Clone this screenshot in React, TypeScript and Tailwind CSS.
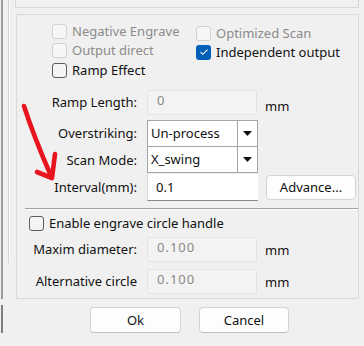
import React from 'react';

const font = { fontFamily: '"Noto Sans", "Open Sans", sans-serif' };

function Check({ label, disabled, checked }: { label: string; disabled?: boolean; checked?: boolean }) {
  return (
    <div className="flex items-center gap-[5px]">
      {checked ? (
        <span className="w-[15px] h-[15px] rounded-[3px] bg-[#005fb8] flex items-center justify-center">
          <svg width="10" height="8" viewBox="0 0 10 8">
            <path d="M1.5 4.2 L3.8 6.3 L8.5 1.6" fill="none" stroke="#fff" strokeWidth="1.1" />
          </svg>
        </span>
      ) : (
        <span
          className={
            disabled
              ? 'w-[15px] h-[15px] rounded-[3px] border border-[#d2d2d2] bg-[#f6f6f6]'
              : 'w-[15px] h-[15px] rounded-[3px] border border-[#5c5c5c] bg-[#f4f4f4]'
          }
        />
      )}
      <span className={disabled ? 'text-[#8b8b8b]' : 'text-[#111]'}>{label}</span>
    </div>
  );
}

function Label({ children }: { children: React.ReactNode }) {
  return <div className="w-[120px] text-right text-[#111]">{children}</div>;
}

function DisabledInput({ value }: { value: string }) {
  return (
    <div className="w-[110px] h-full border border-[#e3e3e3] bg-[#f3f3f3] rounded-[2px] pl-[9px] pt-[3px] text-[#8a8a8a] tracking-[1px]">
      {value}
    </div>
  );
}

function Combo({ value, top }: { value: string; top?: boolean }) {
  return (
    <div className={top ? 'w-[111px] h-[27px] flex border border-[#a5a5a5] bg-white' : 'w-[111px] h-[26px] flex border border-t-0 border-[#a5a5a5] bg-white'}>
      <div className="flex-1 pl-[3px] flex items-center text-[#111]">{value}</div>
      <div className="w-[20px] border-l border-[#a5a5a5] flex items-center justify-center bg-white">
        <svg width="9" height="5" viewBox="0 0 9 5">
          <path d="M0 0 L9 0 L4.5 5 Z" fill="#111" />
        </svg>
      </div>
    </div>
  );
}

export default function App() {
  return (
    <div className="relative w-[364px] h-[346px] bg-[#f0f0f0] flex text-[13px] leading-none overflow-hidden" style={font}>
      {/* left edge of neighbouring window */}
      <div className="w-[15px] flex pl-[1px]">
        <div className="w-[2px] flex flex-col">
          <div className="h-[299px] bg-[#9c9c9c]" />
          <div className="mt-[6px] h-[28px] bg-[#7e7e7e]" />
        </div>
        <div className="ml-[5px] w-[2px] h-[263px] border-l border-[#d2d2d2] bg-[#fafafa]" />
      </div>

      <div className="flex flex-col">
        {/* upper group box (cut off) */}
        <div className="w-[344px] h-[8px] border-x border-b border-[#d9d9d9]" />

        {/* main group box */}
        <div className="ml-[1px] mt-[6px] w-[343px] h-[285px] border border-[#d9d9d9] flex flex-col">
          <div className="pl-[35px] pt-[9px] flex flex-col">
            <div className="h-[19px] flex">
              <div className="w-[144px]"><Check label="Negative Engrave" disabled /></div>
              <Check label="Optimized Scan" disabled />
            </div>
            <div className="h-[18px] flex">
              <div className="w-[144px]"><Check label="Output direct" disabled /></div>
              <Check label="Independent output" checked />
            </div>
            <div className="h-[18px] flex">
              <Check label="Ramp Effect" />
            </div>
          </div>

          {/* Ramp length */}
          <div className="mt-[11px] h-[25px] flex items-center">
            <Label>Ramp Length:</Label>
            <div className="ml-[10px] h-full"><DisabledInput value="0" /></div>
            <span className="ml-[8px] mt-[8px] text-[#111]">mm</span>
          </div>

          {/* Overstriking / Scan mode */}
          <div className="mt-[5px] flex items-center">
            <Label>Overstriking:</Label>
            <div className="ml-[10px]"><Combo value="Un-process" top /></div>
          </div>
          <div className="flex items-center">
            <Label>Scan Mode:</Label>
            <div className="ml-[10px]"><Combo value="X_swing" /></div>
          </div>
          <div className="mt-px flex items-center">
            <Label>Interval(mm):</Label>
            <div className="ml-[10px] w-[111px] h-[27px] bg-white border-b border-[#8a8a8a] border-l border-l-[#d6d6d6] pl-[8px] flex items-center text-[#111]">
              0.1
            </div>
            <button className="ml-[8px] w-[90px] h-[25px] rounded-[4px] bg-[#fdfdfd] border border-[#d4d4d4] text-[#111]">
              Advance...
            </button>
          </div>

          {/* separator */}
          <div className="ml-[8px] mt-[7px] w-[333px] border-t border-[#a0a0a0] border-b border-b-white" />

          <div className="ml-[12px] mt-[6px] h-[15px] flex items-center">
            <Check label="Enable engrave circle handle" />
          </div>

          <div className="mt-[6px] h-[25px] flex items-center">
            <Label>Maxim diameter:</Label>
            <div className="ml-[10px] h-full"><DisabledInput value="0.100" /></div>
            <span className="ml-[8px] mt-[1px] text-[#111]">mm</span>
          </div>
          <div className="mt-[7px] h-[25px] flex items-center">
            <Label>Alternative circle</Label>
            <div className="ml-[10px] h-full"><DisabledInput value="0.100" /></div>
            <span className="ml-[8px] mt-[1px] text-[#111]">mm</span>
          </div>
        </div>

        {/* dialog buttons */}
        <div className="mt-[8px] flex">
          <button className="ml-[75px] w-[91px] h-[26px] rounded-[4px] bg-[#fdfdfd] border border-[#d4d4d4] border-b-[#c2c2c2] text-[#111]">
            Ok
          </button>
          <button className="ml-[18px] w-[90px] h-[26px] rounded-[4px] bg-[#fdfdfd] border border-[#d4d4d4] border-b-[#c2c2c2] text-[#111]">
            Cancel
          </button>
        </div>
      </div>

      {/* red annotation arrow */}
      <svg className="absolute left-0 top-0 pointer-events-none" width="364" height="346" viewBox="0 0 364 346">
        <path d="M24 106 C 31 128, 41 153, 51 176" fill="none" stroke="#e8141e" strokeWidth="4.6" strokeLinecap="round" />
        <path d="M37 172 L52 178 L55 154" fill="none" stroke="#e8141e" strokeWidth="4.6" strokeLinecap="round" strokeLinejoin="round" />
      </svg>
    </div>
  );
}
